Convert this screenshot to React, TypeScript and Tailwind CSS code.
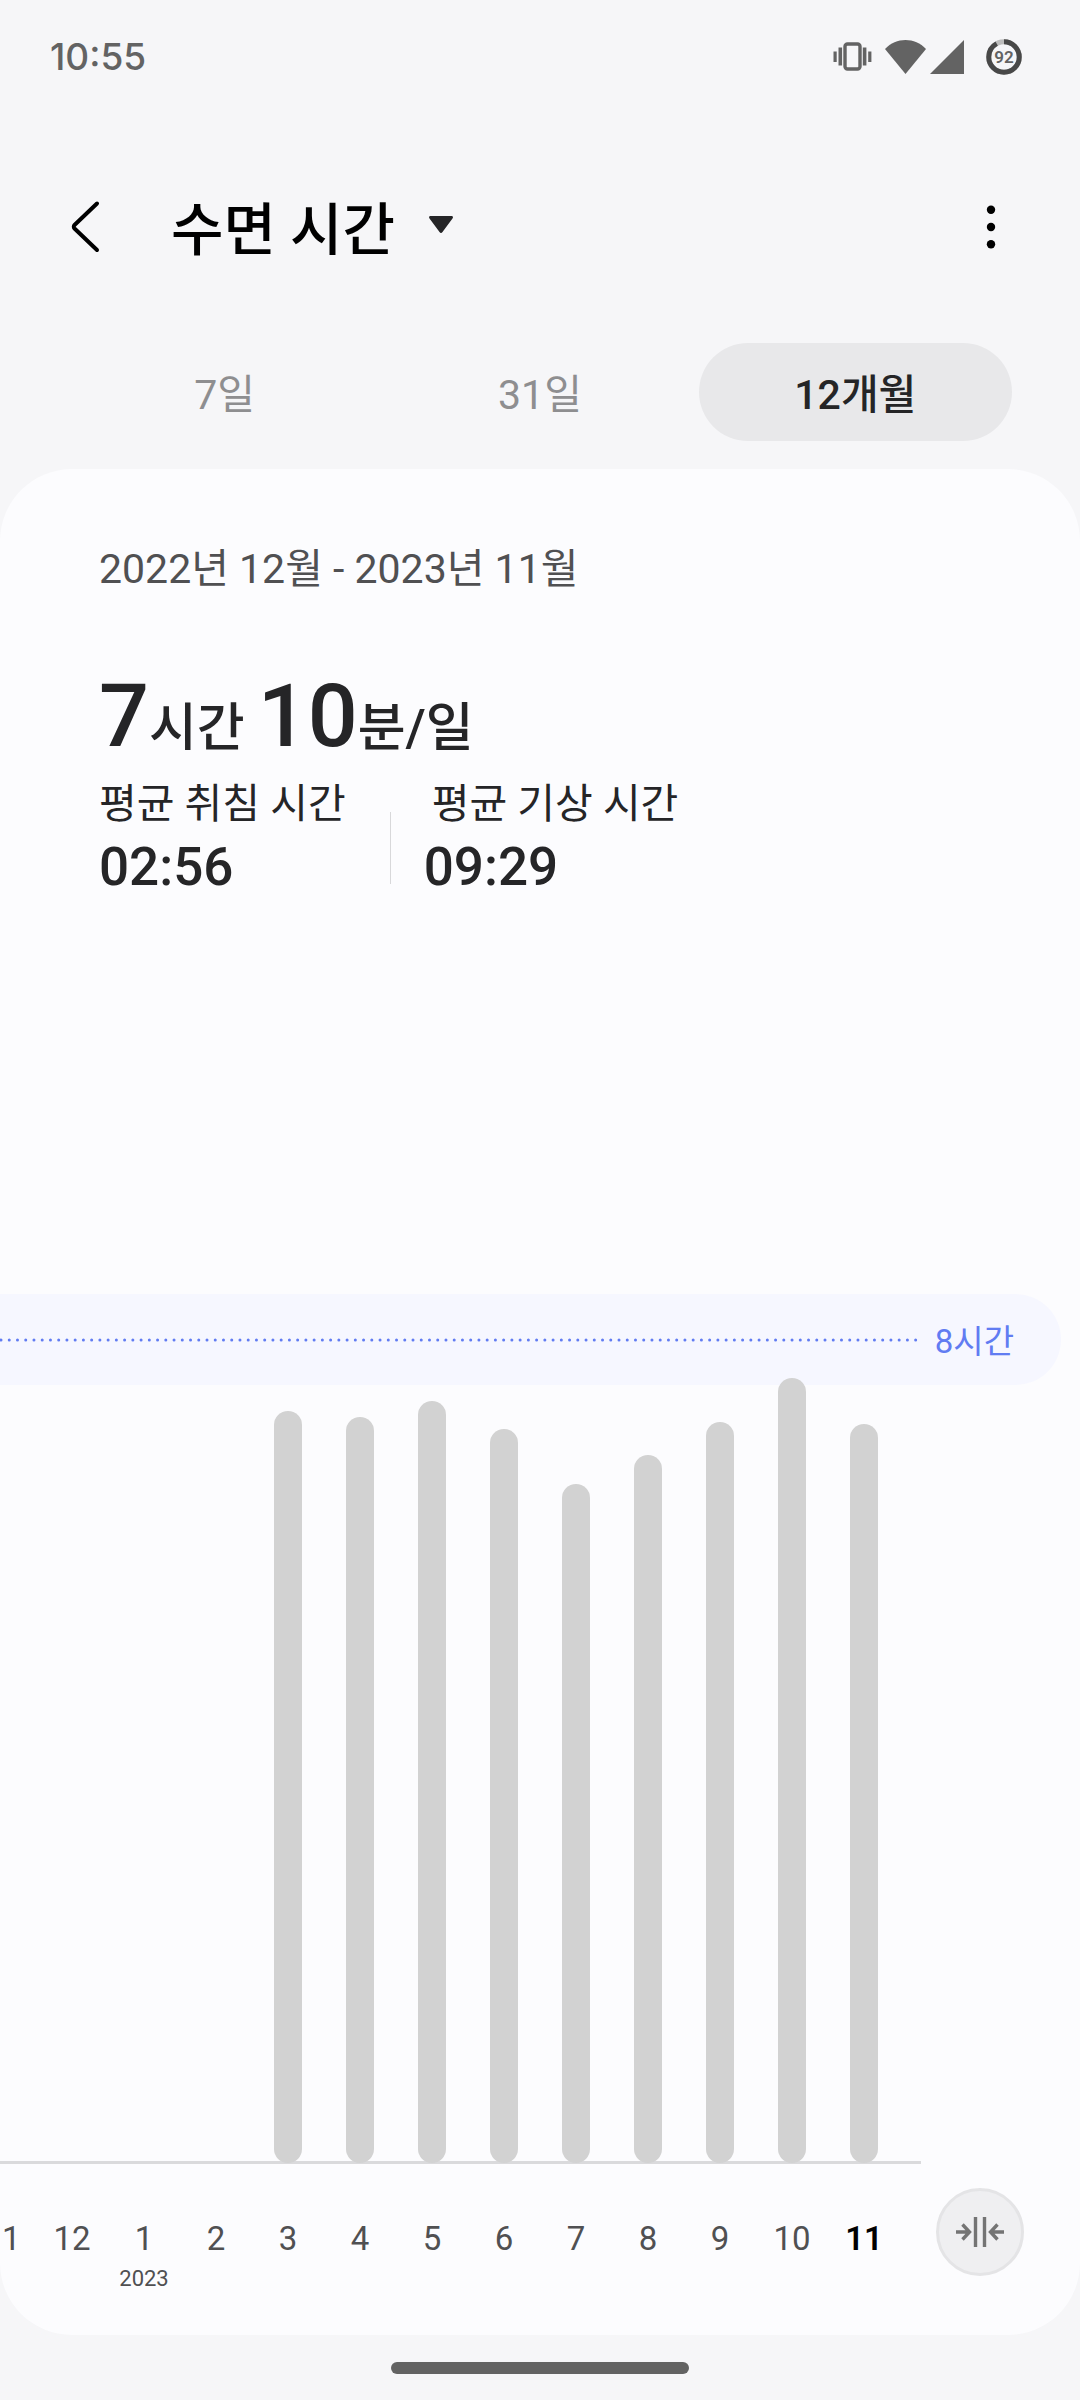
import React from "react";

const months = [
  { label: "12", height: 0 },
  { label: "1", height: 0, year: "2023" },
  { label: "2", height: 0 },
  { label: "3", height: 752 },
  { label: "4", height: 746 },
  { label: "5", height: 762 },
  { label: "6", height: 734 },
  { label: "7", height: 679 },
  { label: "8", height: 708 },
  { label: "9", height: 741 },
  { label: "10", height: 785 },
  { label: "11", height: 739, current: true },
];

const tabs = ["7일", "31일", "12개월"];

function StatusBar() {
  return (
    <div className="flex h-[113px] items-center justify-between pl-[50px] pr-[58px] text-[#636363]">
      <span className="font-['Inter','Roboto',sans-serif] text-[37px] leading-[48px] font-medium">10:55</span>
      <div className="flex items-center">
        <svg className="h-[40px] w-[40px]" viewBox="0 0 40 40" fill="currentColor" aria-label="진동">
          <rect x="12" y="7" width="15" height="25" rx="2.500" fill="none" stroke="currentColor" strokeWidth="3.400" />
          <rect x="5.500" y="10.500" width="3.600" height="18" />
          <rect x="29.800" y="10.500" width="3.600" height="18" />
          <rect x="0.500" y="14.500" width="3.200" height="10.500" />
          <rect x="35.200" y="14.500" width="3.200" height="10.500" />
        </svg>
        <svg className="ml-[12px] h-[36px] w-[41px]" viewBox="0 0 41 36" fill="currentColor" aria-label="Wi-Fi">
          <path d="M20.500 35 0 10C11 -2 30 -2 41 10Z" />
        </svg>
        <svg className="ml-[4px] h-[36px] w-[34px]" viewBox="0 0 34 36" fill="currentColor" aria-label="신호">
          <path d="M34 1v34H0Z" />
        </svg>
        <svg className="ml-[22px] h-[36px] w-[36px]" viewBox="0 0 36 36" aria-label="배터리">
          <circle cx="18" cy="18" r="15.250" fill="none" stroke="#bdbdbd" strokeWidth="5" />
          <circle cx="18" cy="18" r="15.250" fill="none" stroke="#484848" strokeWidth="5" pathLength="100" strokeDasharray="92 8" transform="rotate(-90 18 18)" />
          <text x="18" y="24" textAnchor="middle" fontSize="17" fontWeight="600" fontFamily="'Roboto',sans-serif" fill="#636363">92</text>
        </svg>
      </div>
    </div>
  );
}

function Header() {
  return (
    <header className="mb-[2px] flex h-[228px] items-center pl-[58px] pr-[60px]">
      <button type="button" aria-label="뒤로" className="flex h-[60px] w-[60px] items-center justify-center">
        <svg className="h-[60px] w-[60px]" viewBox="0 0 60 60" fill="none" stroke="#000" strokeWidth="4" strokeLinecap="round" strokeLinejoin="round">
          <path d="M39 6.500 16.500 28a2.500 2.500 0 0 0 0 3.500L39 53" />
        </svg>
      </button>
      <button type="button" className="ml-[53px] flex items-center gap-[34px]">
        <h1 className="pt-[8px] text-[57px] leading-[72px] font-medium text-black">수면 시간</h1>
        <svg className="mb-[4px] h-[18px] w-[24px]" viewBox="0 0 24 18" fill="#252527">
          <path d="M1.500 0h21c1.400 0 2 1.400 1 2.500L13.500 16c-.8 1.300-2.200 1.300-3 0L.5 2.500C-.4 1.400.1 0 1.500 0Z" />
        </svg>
      </button>
      <button type="button" aria-label="옵션 더보기" className="ml-auto flex h-[60px] w-[60px] items-center justify-center">
        <svg className="h-[60px] w-[60px]" viewBox="0 0 60 60" fill="#000">
          <circle cx="31" cy="12.800" r="4.200" />
          <circle cx="31" cy="30" r="4.200" />
          <circle cx="31" cy="47.200" r="4.200" />
        </svg>
      </button>
    </header>
  );
}

function Tabs() {
  return (
    <nav className="mb-[28px] flex gap-[2px] px-[68px]" role="tablist">
      {tabs.map((t, i) => (
        <button
          key={t}
          type="button"
          role="tab"
          aria-selected={i === 2}
          className={
            i === 2
              ? "h-[98px] flex-1 rounded-full bg-[#e8e8ea] pt-[5px] text-[41px] leading-[60px] font-medium text-[#252527]"
              : "h-[98px] flex-1 rounded-full pt-[5px] text-[41px] leading-[60px] text-[#8e8e90]"
          }
        >
          {t}
        </button>
      ))}
    </nav>
  );
}

function Summary() {
  return (
    <section className="px-[99px] pt-[70px] text-[#252527]">
      <p className="text-[41px] leading-[60px] text-[#505052]">2022년 12월 - 2023년 11월</p>
      <p className="mt-[70px] text-[52px] leading-[94px] font-medium">
        <span className="text-[88px]">7</span>시간 <span className="text-[88px]">10</span>분/일
      </p>
      <div className="flex items-end">
        <div>
          <p className="text-[41px] leading-[56px]">평균 취침 시간</p>
          <p className="text-[53px] leading-[70px] font-medium">02:56</p>
        </div>
        <div className="mb-[18px] ml-[44px] h-[72px] w-px bg-[#d8d8da]" />
        <div className="ml-[33px]">
          <p className="pl-[8px] text-[41px] leading-[56px]">평균 기상 시간</p>
          <p className="text-[53px] leading-[70px] font-medium">09:29</p>
        </div>
      </div>
    </section>
  );
}

function Chart() {
  return (
    <section className="mt-[392px]">
      <div className="mr-[19px] flex h-[91px] items-center rounded-r-full bg-[#f6f7ff] pr-[47px] text-[#617cf2]">
        <svg className="h-[4px] min-w-0 flex-1">
          <line x1="1" y1="2" x2="100%" y2="2" stroke="currentColor" strokeWidth="3" strokeLinecap="round" strokeDasharray="0.010 8.230" />
        </svg>
        <span className="ml-[15px] pt-[4px] text-[33px] leading-[48px]">8시간</span>
      </div>
      <div className="relative -mt-[7px] mr-[159px] h-[786px] border-b-[3px] border-[#dadadc]">
        <div className="absolute inset-x-0 -bottom-[2px] flex items-end justify-end pr-[21px]">
          {months.map((m, i) => (
            <div key={i} className="flex w-[72px] shrink-0 justify-center">
              <div className="w-[28px] rounded-full bg-[#d2d2d2]" style={{ height: m.height }} />
            </div>
          ))}
        </div>
      </div>
      <div className="flex h-[171px]">
        <div className="flex min-w-0 flex-1 justify-end pr-[21px] pt-[51px] text-[33px] leading-[48px] text-[#505052]">
          <span className="w-[36px] shrink-0 pl-[2px]">1</span>
          {months.map((m, i) => (
            <div key={i} className="flex w-[72px] shrink-0 flex-col items-center">
              <span className={m.current ? "font-semibold text-black" : ""}>{m.label}</span>
              {m.year && <span className="text-[22px] leading-[32px]">{m.year}</span>}
            </div>
          ))}
        </div>
        <div className="w-[159px] pl-[15px] pt-[24px]">
          <button type="button" aria-label="차트 축소" className="flex h-[88px] w-[88px] items-center justify-center rounded-full border-[3px] border-[#e4e4e6] bg-[#efeff1]">
            <svg className="h-[48px] w-[48px]" viewBox="0 0 48 48" fill="none" stroke="#747474" strokeWidth="3.400">
              <path d="M19.500 9v30M28.500 9v30M0 24h13.500M6.500 16.500l7 7.500-7 7.500M48 24H34.500M41.500 16.500l-7 7.500 7 7.500" />
            </svg>
          </button>
        </div>
      </div>
    </section>
  );
}

export default function App() {
  return (
    <div className="min-h-screen overflow-hidden bg-[#f6f6f8] font-['Roboto','Noto_Sans_CJK_KR',sans-serif]" lang="ko">
      <StatusBar />
      <Header />
      <Tabs />
      <main className="overflow-hidden rounded-[72px] bg-[#fcfcfe]">
        <Summary />
        <Chart />
      </main>
      <div className="flex h-[66px] items-center justify-center">
        <div className="h-[12px] w-[298px] rounded-full bg-[#636363]" />
      </div>
    </div>
  );
}
